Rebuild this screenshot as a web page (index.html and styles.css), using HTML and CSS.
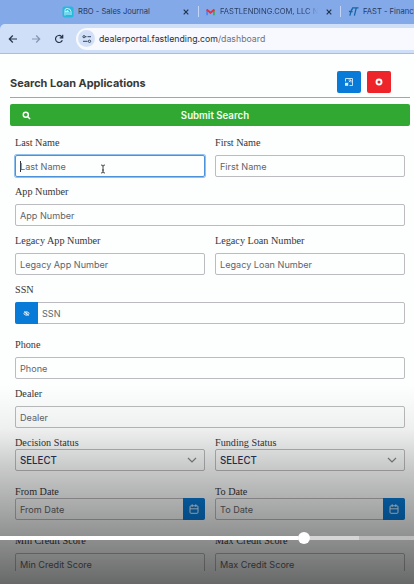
FILE: index.html
```
<!DOCTYPE html>
<html lang="en">
<head>
<meta charset="utf-8">
<title>Search Loan Applications</title>
<link rel="stylesheet" href="styles.css">
</head>
<body>
<div class="frame">
  <header class="tabs">
    <div class="tab tab-one">
      <svg class="favicon" viewBox="0 0 12 12"><rect width="11" height="11" x=".5" y=".5" rx="2" fill="#27b9dc"/><path d="M3 9.500V4q0-1.500 2-1.500 4 0 4 3v3.500M5 9V5.500q2-1 2 1V9M3 6l3-1.500" fill="none" stroke="#d9faff" stroke-width=".9"/></svg>
      <span class="tab-text">RBO - Sales Journal</span>
      <svg class="close" viewBox="0 0 6 6"><path d="M.7.7l4.600 4.600M5.300.7L.7 5.300"/></svg>
    </div>
    <div class="tab tab-two">
      <svg class="favicon mail" viewBox="0 0 10 8"><path d="M1.200 7.500V1.500" stroke="#4285f4" stroke-width="1.800"/><path d="M8.800 7.500V1.500" stroke="#34a853" stroke-width="1.800"/><path d="M.7 1.200L5 4.800l4.300-3.600" fill="none" stroke="#e8303a" stroke-width="2"/></svg>
      <span class="tab-text faded">FASTLENDING.COM, LLC N</span>
      <svg class="close" viewBox="0 0 6 6"><path d="M.7.7l4.600 4.600M5.300.7L.7 5.300"/></svg>
    </div>
    <div class="tab tab-three">
      <svg class="favicon fast" viewBox="0 0 12 12"><path d="M4.500 2h7M9 2L7 10.500M2 10.500L3.700 4.500q.3-1.500 1.800-1.500M1 6h4" fill="none" stroke="#1566a5" stroke-width="1.400"/></svg>
      <span class="tab-text">FAST - Financi</span>
    </div>
  </header>
  <nav class="toolbar">
    <svg class="nav" viewBox="0 0 10 10"><path d="M9 5H1.500M4.800 1.500L1.300 5l3.500 3.500" stroke="#273549"/></svg>
    <svg class="nav" viewBox="0 0 10 10"><path d="M1 5h7.500M5.200 1.500L8.700 5 5.200 8.500" stroke="#8795b2"/></svg>
    <svg class="nav" viewBox="0 0 10 10"><path d="M8.300 6.200A3.500 3.500 0 1 1 7.500 2.500L8.500 3.500M8.700.8v3H5.700" stroke="#273549"/></svg>
    <div class="address">
      <span class="site"><svg viewBox="0 0 10 10"><path d="M3 2.700h1.500M1 7.300h4.500M5.500 2.700H9" stroke="#34435f"/><circle cx="2" cy="2.700" r="1.100" fill="none" stroke="#34435f"/><circle cx="7.500" cy="7.300" r="1.200" fill="none" stroke="#34435f"/></svg></span>
      <span class="url">dealerportal.fastlending.com<span class="path">/dashboard</span></span>
    </div>
  </nav>
  <main class="page">
    <div class="heading">
      <h1>Search Loan Applications</h1>
      <button class="action blue"><svg viewBox="0 0 10 10"><path d="M1.500 4.500V1.500h7v7H5.500M4.800 5.200L6.800 3.200M4.500 3H7v2.500" fill="none" stroke="#d8efff" stroke-width=".9"/><rect x="1" y="5.800" width="3.200" height="3" fill="#d8efff"/></svg></button>
      <button class="action red"><svg viewBox="0 0 10 10"><circle cx="5" cy="5" r="2.500" fill="#d7262d" stroke="#fff" stroke-width="1.900"/></svg></button>
    </div>
    <button class="submit"><svg viewBox="0 0 10 10"><circle cx="4.200" cy="4.200" r="2.800"/><path d="M6.300 6.300L9 9"/></svg><span>Submit Search</span></button>
    <form class="form">
      <div class="row">
        <div class="field"><label>Last Name</label><div class="box focus"><span class="ph"><i class="caret"></i>Last Name</span>
          <svg class="ibeam" viewBox="0 0 6 10"><path d="M1 1q2 0 2 1.200Q3 1 5 1M3 2v6M1 9q2 0 2-1.200Q3 9 5 9M2 6h2" fill="none" stroke="#333" stroke-width=".9"/></svg></div></div>
        <div class="field"><label>First Name</label><div class="box"><span class="ph">First Name</span></div></div>
      </div>
      <div class="row"><div class="field"><label>App Number</label><div class="box"><span class="ph">App Number</span></div></div></div>
      <div class="row">
        <div class="field"><label>Legacy App Number</label><div class="box"><span class="ph">Legacy App Number</span></div></div>
        <div class="field"><label>Legacy Loan Number</label><div class="box"><span class="ph">Legacy Loan Number</span></div></div>
      </div>
      <div class="row tall"><div class="field"><label>SSN</label><div class="box"><span class="addon left"><svg viewBox="0 0 8 8"><path d="M.8 4Q4 0 7.200 4 4 8 .8 4z" fill="none" stroke="#fff"/><circle cx="4" cy="4" r="1.100" fill="#fff"/><path d="M1.500 1.300l5 5.400" stroke="#fff" stroke-width=".8"/></svg></span><span class="ph">SSN</span></div></div></div>
      <div class="row"><div class="field"><label>Phone</label><div class="box"><span class="ph">Phone</span></div></div></div>
      <div class="row"><div class="field"><label>Dealer</label><div class="box"><span class="ph">Dealer</span></div></div></div>
      <div class="row tight">
        <div class="field"><label>Decision Status</label><div class="box"><span class="select">SELECT</span><svg class="chevron" viewBox="0 0 10 6"><path d="M1 1l4 4 4-4"/></svg></div></div>
        <div class="field"><label>Funding Status</label><div class="box"><span class="select">SELECT</span><svg class="chevron" viewBox="0 0 10 6"><path d="M1 1l4 4 4-4"/></svg></div></div>
      </div>
      <div class="row tight">
        <div class="field"><label>From Date</label><div class="box"><span class="ph">From Date</span><span class="addon right"><svg viewBox="0 0 10 10"><rect x="1" y="1.800" width="8" height="7.500" rx="1"/><path d="M1 4.800h8M3.200.3v2.500M6.800.3v2.500"/></svg></span></div></div>
        <div class="field"><label>To Date</label><div class="box"><span class="ph">To Date</span><span class="addon right"><svg viewBox="0 0 10 10"><rect x="1" y="1.800" width="8" height="7.500" rx="1"/><path d="M1 4.800h8M3.200.3v2.500M6.800.3v2.500"/></svg></span></div></div>
      </div>
      <div class="row last">
        <div class="field"><label>Min Credit Score</label><div class="box"><span class="ph">Min Credit Score</span></div></div>
        <div class="field"><label>Max Credit Score</label><div class="box"><span class="ph">Max Credit Score</span></div></div>
      </div>
    </form>
  </main>
  <div class="shade"></div>
  <div class="progress"><span class="played"></span><span class="knob"></span><span class="buffered"></span></div>
</div>
</body>
</html>
```
FILE: styles.css
```
* { box-sizing: border-box; }
body { margin: 0; font-family: Inter, sans-serif; }
.frame { position: relative; width: 414px; height: 584px; overflow: hidden; background: #fdfefe; }
svg { display: block; flex: none; }

.tabs { display: flex; height: 24px; background: #84a9e9; font-size: 7.6px; color: #263a60; }
.tab { display: flex; flex: none; align-items: center; height: 23px; white-space: nowrap; }
.tab-one { width: 199px; padding-left: 62px; }
.tab-two { width: 142px; padding-left: 7px; }
.tab-three { width: 73px; padding-left: 7px; }
.tab-one, .tab-two { background: linear-gradient(#c1d5f6, #c1d5f6) right 0 top 6px / 1px 11px no-repeat; }
.favicon { width: 12px; height: 12px; margin-right: 4px; }
.mail { width: 9px; height: 8px; margin-right: 5px; }
.fast { width: 11px; height: 11px; }
.tab-one .close { margin-right: 10px; }
.tab-two .close { margin-right: 9px; }
.tab-text { flex: none; }
.faded { background: linear-gradient(90deg, #263a60 88%, #84a9e9); -webkit-background-clip: text; background-clip: text; color: transparent; }
.close { width: 6px; height: 6px; margin-left: auto; fill: none; stroke: #22334f; stroke-width: 1.2; }

.toolbar { display: flex; align-items: center; height: 30px; padding: 0 0 0 8px; background: #cfdff8; border-bottom: 1px solid #a9bdde; border-radius: 5px 0 0 0; box-shadow: -5px -5px 0 #84a9e9; }
.nav { width: 10px; height: 10px; margin-right: 13px; fill: none; stroke-width: 1.2; }
.address { display: flex; flex: 1; align-items: center; height: 22px; margin-left: -1px; padding-left: 2px; background: #f7f9fe; border-radius: 11px 0 0 11px; }
.site { display: flex; align-items: center; justify-content: center; width: 17px; height: 17px; margin-right: 4px; border-radius: 50%; background: #d3e1f8; }
.site svg { width: 10px; height: 10px; }
.url { font-size: 8.75px; color: #263040; white-space: nowrap; }
.path { color: #6c7280; }

.page { padding: 17px 4px 0 10px; }
.heading { display: flex; align-items: flex-start; height: 27px; padding-right: 19px; border-bottom: 1px solid #a5a5a5; }
h1 { flex: 1; margin: 4px 0 0; font: 700 10.9px/16px Inter, sans-serif; color: #383838; white-space: nowrap; }
.action { display: flex; align-items: center; justify-content: center; width: 24px; height: 22px; margin-left: 6px; padding: 0; border: 0; border-radius: 2px; }
.action svg { width: 10px; height: 10px; }
.blue { background: #087bd8; }
.red { background: #ed252b; }
.submit { display: flex; align-items: center; width: 400px; height: 22px; margin: 6px 0 0; padding: 0 12px; border: 0; border-radius: 2px; background: #30a832; color: #f4fff2; font: 600 9.7px/21px Inter, sans-serif; }
.submit svg { width: 9px; height: 9px; fill: none; stroke: #fff; stroke-width: 1.6; }
.submit span { flex: 1; padding-left: 1px; text-align: center; }

.form { padding: 9px 5px 0 5px; }
.row { display: flex; gap: 10px; height: 49px; }
.tall { height: 55px; }
.field { flex: 1; }
label { display: block; height: 20px; font: 10.2px/16px "Liberation Serif", serif; color: #363636; white-space: nowrap; }
.box { position: relative; display: flex; align-items: center; height: 22px; border: 1px solid #bcbcc0; border-radius: 2px; background: transparent; }
.ph { padding-left: 4px; font-size: 9.1px; color: #62656a; white-space: nowrap; }
.focus { border-color: #4b92d8; box-shadow: 0 0 0 1px #90c0ee; }
.caret { display: inline-block; width: 1px; height: 11px; margin-right: -1px; vertical-align: -2px; background: #333; }
.ibeam { position: absolute; left: 84px; top: 8px; width: 6px; height: 10px; }
.tight label { height: 14px; }
.select { flex: 1; padding-left: 4px; font-size: 9.7px; font-weight: 500; color: #2c365e; }
.chevron { width: 10px; height: 6px; margin-right: 7px; fill: none; stroke: #85878c; stroke-width: 1.2; }
.addon { display: flex; align-items: center; justify-content: center; align-self: stretch; margin: -1px; background: #087bd8; }
.left { width: 23px; margin-right: 0; border-radius: 2px 0 0 2px; }
.left svg { width: 7px; height: 7px; }
.right { width: 22px; margin-left: auto; border-radius: 0 2px 2px 0; }
.right svg { width: 10px; height: 10px; fill: none; stroke: #d9f0ff; }
.last { height: 38px; overflow: hidden; }

.shade { position: absolute; inset: 385px 0 0; background: linear-gradient(rgba(0,0,0,0), rgba(0,0,0,.06) 22%, rgba(0,0,0,.21) 42%, rgba(0,0,0,.41) 73%, rgba(0,0,0,.59)); }
.progress { position: absolute; left: 0; right: 0; top: 532px; display: flex; align-items: center; height: 12px; background: linear-gradient(#bbb, #bbb) 0 4px / 100% 4px no-repeat; }
.played { width: 298px; height: 4px; background: #fff; }
.knob { width: 12px; height: 12px; border-radius: 50%; background: #fff; }
.buffered { width: 49px; height: 4px; background: #d6d6d6; }
```
